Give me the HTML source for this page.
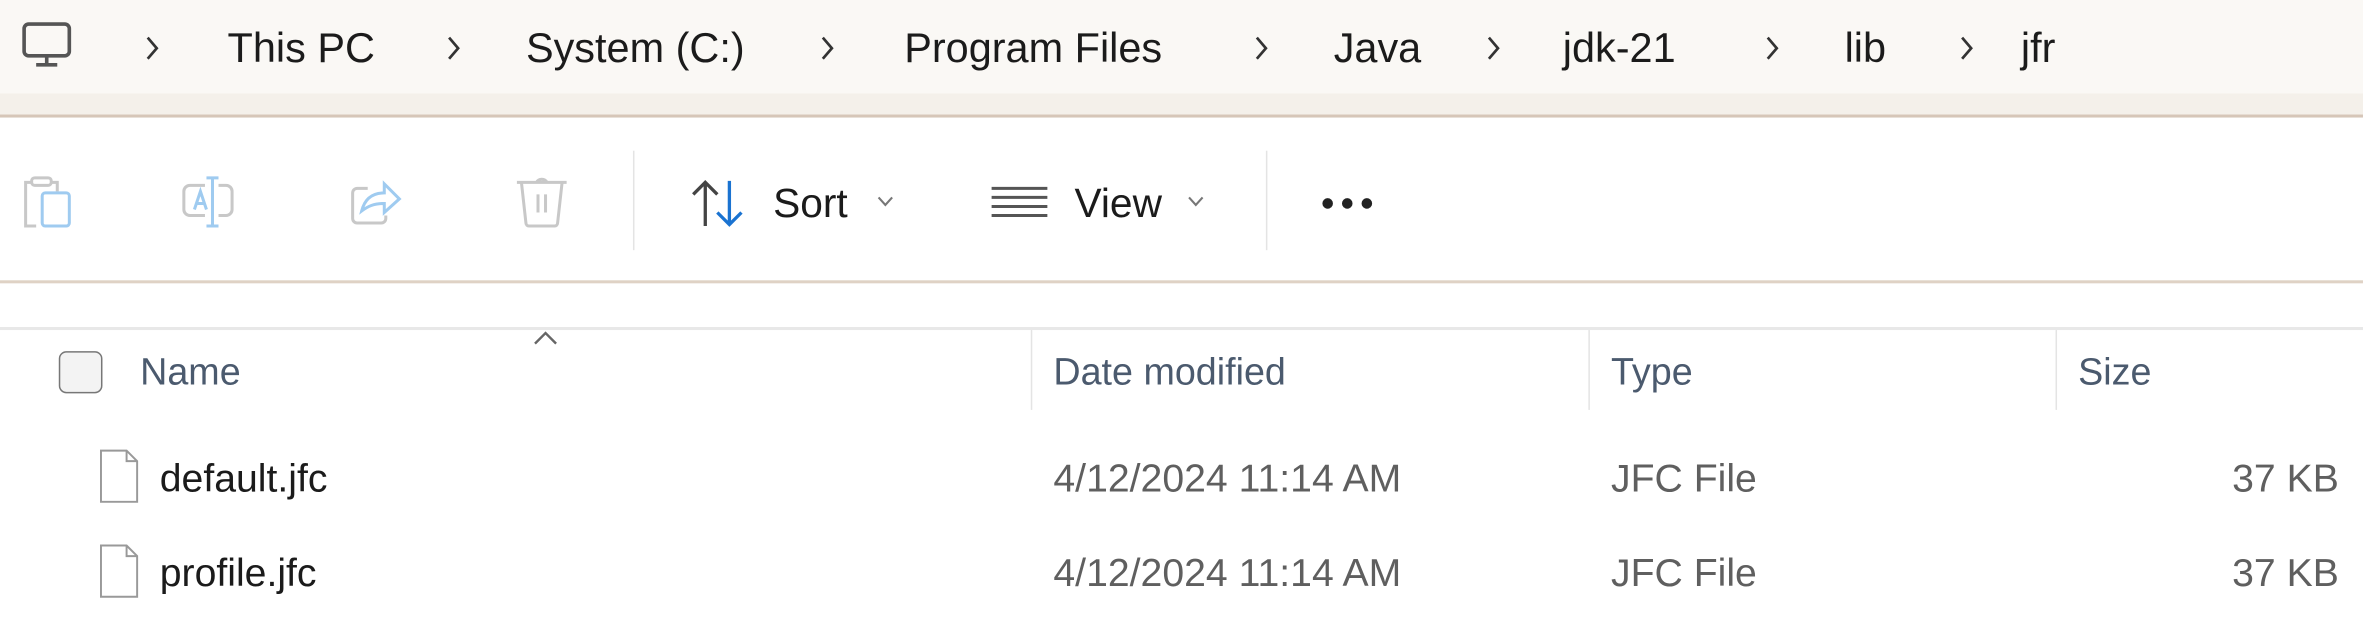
<!DOCTYPE html>
<html><head><meta charset="utf-8"><style>
html,body{margin:0;padding:0;width:2363px;height:623px;overflow:hidden;background:#fff}
#w{position:absolute;left:0;top:0;width:1568px;height:414px;transform:scale(1.507);transform-origin:0 0;font-family:"Liberation Sans",sans-serif;color:#1b1b1b}
.a{position:absolute;white-space:nowrap}
.bc{font-size:27.5px;top:15px;line-height:34px}
.chev{top:24px}
.hd{font-size:25px;top:232px;color:#4b5a6e;line-height:30px}
.r{font-size:26px;line-height:30px}
.g{color:#5f5f5f}
.sep{position:absolute;width:1px;background:#e4e4e4}
</style></head><body><div id="w">
<div class="a" style="left:0;top:0;width:1568px;height:62px;background:#faf8f5"></div>
<div class="a" style="left:0;top:62px;width:1568px;height:15px;background:#f4f0ea"></div>
<div class="a" style="left:0;top:76px;width:1568px;height:2px;background:#d6c6b8"></div>
<div class="a" style="left:0;top:186px;width:1568px;height:2px;background:#dfd2c5"></div>
<div class="a" style="left:0;top:217px;width:1568px;height:2px;background:#e8e8e8"></div>

<svg class="a" style="left:14px;top:14px" width="36" height="32" viewBox="0 0 36 32"><rect x="2" y="2" width="30" height="21" rx="3" fill="none" stroke="#555" stroke-width="2.4"/><path d="M17 23v5M10 29h14" stroke="#555" stroke-width="2.4"/></svg>
<svg class="a chev" style="left:96px" width="10" height="16" fill="none" stroke="#333" stroke-width="1.8"><path d="M2 1l6 7-6 7"/></svg>
<div class="a bc" style="left:151px">This PC</div>
<svg class="a chev" style="left:296px" width="10" height="16" fill="none" stroke="#333" stroke-width="1.8"><path d="M2 1l6 7-6 7"/></svg>
<div class="a bc" style="left:349px">System (C:)</div>
<svg class="a chev" style="left:544px" width="10" height="16" fill="none" stroke="#333" stroke-width="1.8"><path d="M2 1l6 7-6 7"/></svg>
<div class="a bc" style="left:600px">Program Files</div>
<svg class="a chev" style="left:832px" width="10" height="16" fill="none" stroke="#333" stroke-width="1.8"><path d="M2 1l6 7-6 7"/></svg>
<div class="a bc" style="left:885px">Java</div>
<svg class="a chev" style="left:986px" width="10" height="16" fill="none" stroke="#333" stroke-width="1.8"><path d="M2 1l6 7-6 7"/></svg>
<div class="a bc" style="left:1037px">jdk-21</div>
<svg class="a chev" style="left:1171px" width="10" height="16" fill="none" stroke="#333" stroke-width="1.8"><path d="M2 1l6 7-6 7"/></svg>
<div class="a bc" style="left:1224px">lib</div>
<svg class="a chev" style="left:1300px" width="10" height="16" fill="none" stroke="#333" stroke-width="1.8"><path d="M2 1l6 7-6 7"/></svg>
<div class="a bc" style="left:1341px">jfr</div>

<svg class="a" style="left:12px;top:116px" width="40" height="36" viewBox="0 0 40 36" fill="none" stroke-width="2"><path d="M12 34H5V5h4M22 5h4v6" stroke="#c8c8c8"/><rect x="9" y="2" width="13" height="5" rx="2" stroke="#c8c8c8"/><rect x="16" y="12" width="18" height="22" rx="2" stroke="#9fcbf0"/></svg>
<svg class="a" style="left:118px;top:116px" width="44" height="36" viewBox="0 0 44 36" fill="none" stroke-width="2"><path d="M18 7H8a4 4 0 0 0-4 4v12a4 4 0 0 0 4 4h10M27 7h5a4 4 0 0 1 4 4v12a4 4 0 0 1-4 4h-5" stroke="#c8c8c8"/><path d="M23 2v32M19 2h8M19 34h8M11 23l4-12 4 12M12.5 19h5" stroke="#9fcbf0"/></svg>
<svg class="a" style="left:230px;top:116px" width="42" height="36" viewBox="0 0 42 36" fill="none" stroke-width="2"><path d="M14 9H7a3 3 0 0 0-3 3v17a3 3 0 0 0 3 3h16a3 3 0 0 0 3-3v-2" stroke="#c8c8c8"/><path d="M10 24c2-8 7-12 15-12V6l10 10-10 9v-6c-7 0-11 2-15 5z" stroke="#9fcbf0"/></svg>
<svg class="a" style="left:340px;top:114px" width="40" height="38" viewBox="0 0 40 38" fill="none" stroke="#c8c8c8" stroke-width="2"><path d="M3 7h33M16 7a4 4 0 0 1 7 0M6 7l3 27a2 2 0 0 0 2 2h17a2 2 0 0 0 2-2l3-27M17 15v12M22 15v12"/></svg>
<div class="sep" style="left:420px;top:100px;height:66px"></div>
<svg class="a" style="left:457px;top:118px" width="40" height="34" viewBox="0 0 40 34" fill="none" stroke-width="2.2"><path d="M11 32V3M3 11l8-8 8 8" stroke="#444"/><path d="M27 2v29M19 23l8 8 8-8" stroke="#1a73d1"/></svg>
<div class="a" style="left:513px;top:119px;font-size:27px;line-height:32px">Sort</div>
<svg class="a" style="left:582px;top:130px" width="11" height="7" fill="none" stroke="#777" stroke-width="1.4"><path d="M1 1l4.5 5L10 1"/></svg>
<svg class="a" style="left:657px;top:122px" width="40" height="26" viewBox="0 0 40 26" stroke="#555" stroke-width="2"><path d="M1 3h37M1 9h37M1 15h37M1 21h37"/></svg>
<div class="a" style="left:713px;top:119px;font-size:27px;line-height:32px">View</div>
<svg class="a" style="left:788px;top:130px" width="11" height="7" fill="none" stroke="#777" stroke-width="1.4"><path d="M1 1l4.5 5L10 1"/></svg>
<div class="sep" style="left:840px;top:100px;height:66px"></div>
<svg class="a" style="left:876px;top:130px" width="40" height="10"><circle cx="5" cy="5" r="3.5" fill="#222"/><circle cx="18" cy="5" r="3.5" fill="#222"/><circle cx="31" cy="5" r="3.5" fill="#222"/></svg>

<div class="a" style="left:39px;top:233px;width:27px;height:26px;border:1.6px solid #777;border-radius:5px;background:#f3f3f3"></div>
<div class="a hd" style="left:93px">Name</div>
<svg class="a" style="left:353px;top:219px" width="18" height="11" fill="none" stroke="#666" stroke-width="1.6"><path d="M2 9l7-7 7 7"/></svg>
<div class="sep" style="left:684px;top:219px;height:53px"></div>
<div class="a hd" style="left:699px">Date modified</div>
<div class="sep" style="left:1054px;top:219px;height:53px"></div>
<div class="a hd" style="left:1069px">Type</div>
<div class="sep" style="left:1364px;top:219px;height:53px"></div>
<div class="a hd" style="left:1379px">Size</div>

<svg class="a" style="left:65px;top:298px" width="28" height="36" fill="#fff" stroke="#999" stroke-width="1.3"><path d="M2 1h17l7 7v27H2z"/><path d="M19 1v7h7" fill="none"/></svg>
<div class="a r" style="left:106px;top:302px">default.jfc</div>
<div class="a r g" style="left:699px;top:302px">4/12/2024 11:14 AM</div>
<div class="a r g" style="left:1069px;top:302px">JFC File</div>
<div class="a r g" style="right:16px;top:302px">37 KB</div>

<svg class="a" style="left:65px;top:361px" width="28" height="36" fill="#fff" stroke="#999" stroke-width="1.3"><path d="M2 1h17l7 7v27H2z"/><path d="M19 1v7h7" fill="none"/></svg>
<div class="a r" style="left:106px;top:365px">profile.jfc</div>
<div class="a r g" style="left:699px;top:365px">4/12/2024 11:14 AM</div>
<div class="a r g" style="left:1069px;top:365px">JFC File</div>
<div class="a r g" style="right:16px;top:365px">37 KB</div>
</div></body></html>
